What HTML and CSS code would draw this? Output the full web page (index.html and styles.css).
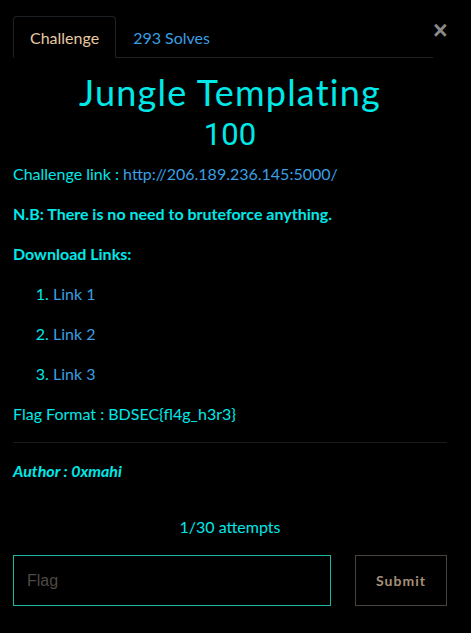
FILE: index.html
```html
<!DOCTYPE html>
<html lang="en">
<head>
    <meta charset="UTF-8">
    <meta name="viewport" content="width=device-width, initial-scale=1.0">
    <title>Jungle Templating</title>
    <link rel="stylesheet" href="styles.css">
</head>
<body>
    <div class="modal">
        <div class="modal-top">
            <ul class="nav-tabs">
                <li class="tab active">Challenge</li>
                <li class="tab">293 Solves</li>
            </ul>
            <button class="close-btn">&times;</button>
        </div>

        <h2 class="challenge-name">Jungle Templating</h2>
        <h3 class="challenge-value">100</h3>

        <div class="description">
            <p>Challenge link : <a href="#">http://206.189.236.145:5000/</a></p>
            <p><strong>N.B: There is no need to bruteforce anything.</strong></p>
            <p><strong>Download Links:</strong></p>
            <ol>
                <li><a href="#">Link 1</a></li>
                <li><a href="#">Link 2</a></li>
                <li><a href="#">Link 3</a></li>
            </ol>
            <p>Flag Format : BDSEC{fl4g_h3r3}</p>
            <hr>
            <p><em><strong>Author : 0xmahi</strong></em></p>
        </div>

        <div class="attempts">1/30 attempts</div>

        <div class="submit-row">
            <input class="flag-input" type="text" placeholder="Flag">
            <button class="submit-btn">Submit</button>
        </div>
    </div>
</body>
</html>
```

FILE: styles.css
```css
body {
    margin: 0;
    background-color: #000;
    font-family: Lato, "Open Sans", sans-serif;
    color: #00e8e8;
}
.modal {
    padding: 16px 24px 20px 13px;
}
.modal-top {
    display: flex;
    align-items: flex-start;
}
.nav-tabs {
    flex: 1;
    display: flex;
    list-style: none;
    margin: 0;
    padding: 0;
    border-bottom: 1px solid #1c2226;
}
.tab {
    padding: 10px 16px 9px 16px;
    font-size: 16px;
    line-height: 21px;
    color: #3a9fe2;
    border: 1px solid transparent;
    border-radius: 4px 4px 0 0;
    margin-bottom: -1px;
}
.tab.active {
    color: #e8c9a0;
    border-color: #1c2226;
    border-bottom-color: #000;
}
.close-btn {
    background: none;
    border: none;
    color: #8a8a8a;
    font-family: Arial, sans-serif;
    font-size: 25px;
    font-weight: bold;
    line-height: 20px;
    padding: 0;
    margin: 4px 0 0 0;
    width: 14px;
    cursor: pointer;
}
.challenge-name {
    font-family: Lato, sans-serif;
    font-weight: 400;
    font-size: 36px;
    letter-spacing: 1.2px;
    text-align: center;
    margin: 14px 0 0 0;
    line-height: 40px;
}
.challenge-value {
    font-family: Roboto, sans-serif;
    font-weight: 400;
    font-size: 31px;
    text-align: center;
    margin: 5px 0 0 0;
    line-height: 36px;
}
.description {
    font-size: 16px;
    line-height: 24px;
    margin-top: 9px;
}
.description p {
    margin: 0 0 16px 0;
}
.description ol {
    margin: 0 0 16px 0;
    padding-left: 40px;
}
.description li {
    margin-bottom: 16px;
}
.description a {
    color: #3a9fe2;
    text-decoration: none;
}
.description hr {
    border: none;
    border-top: 1px solid #1a1a1a;
    margin: 12px 0 16px 0;
}
.attempts {
    text-align: center;
    font-size: 16px;
    line-height: 24px;
    margin-top: 32px;
}
.submit-row {
    display: flex;
    gap: 24px;
    margin-top: 16px;
}
.flag-input {
    flex: 1;
    height: 51px;
    box-sizing: border-box;
    background: #000;
    border: 1px solid #19b9a3;
    color: #ccc;
    font-family: "Liberation Sans", Arial, sans-serif;
    font-size: 16px;
    padding: 0 13px;
    outline: none;
}
.flag-input::placeholder {
    color: #4f4a44;
}
.submit-btn {
    width: 92px;
    height: 51px;
    background: #000;
    border: 1px solid #4a433d;
    color: #a68f78;
    font-family: Lato, sans-serif;
    font-weight: bold;
    font-size: 14px;
    letter-spacing: 1px;
    cursor: pointer;
}
```
